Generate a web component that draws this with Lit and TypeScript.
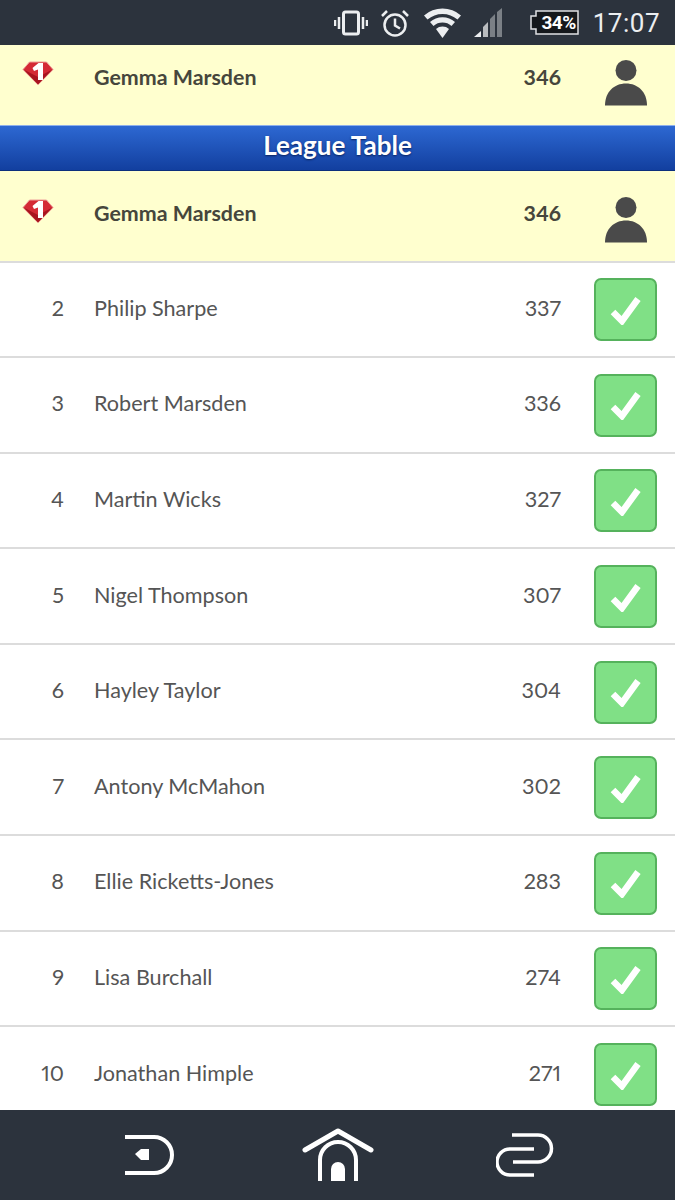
import { LitElement, html, css } from 'lit';
import { customElement } from 'lit/decorators.js';

const players = [
  { pos: 2, name: 'Philip Sharpe', pts: 337 },
  { pos: 3, name: 'Robert Marsden', pts: 336 },
  { pos: 4, name: 'Martin Wicks', pts: 327 },
  { pos: 5, name: 'Nigel Thompson', pts: 307 },
  { pos: 6, name: 'Hayley Taylor', pts: 304 },
  { pos: 7, name: 'Antony McMahon', pts: 302 },
  { pos: 8, name: 'Ellie Ricketts-Jones', pts: 283 },
  { pos: 9, name: 'Lisa Burchall', pts: 274 },
  { pos: 10, name: 'Jonathan Himple', pts: 271 },
];

const gem = html`<svg class="gem" width="32" height="24" viewBox="0 0 32 24">
  <path d="M7.500 1h17L31 8.500 16 23.500 1 8.500z" fill="#d42a35" stroke="#eea09a" stroke-width="1" stroke-linejoin="round"/>
  <path d="M1.500 8.500L16 23.500 30.500 8.500 16 16z" fill="#a8141f"/>
  <path d="M10.500 7l6-5h4.500v17h-5V8.500l-4 1.500z" fill="#fff"/>
</svg>`;

const person = html`<svg class="person" width="42" height="46" viewBox="0 0 42 46">
  <circle cx="21" cy="10.500" r="10.500" fill="#4a4a4a"/>
  <path d="M0 45.500C0 32 9 23.500 21 23.500S42 32 42 45.500z" fill="#4a4a4a"/>
</svg>`;

const check = html`<span class="check"><svg width="32" height="30" viewBox="0 0 32 30">
  <path d="M3 17l9 9L28 4" fill="none" stroke="#fff" stroke-width="6.500"/>
</svg></span>`;

@customElement('app-root')
export class AppRoot extends LitElement {
  static styles = css`
    :host {
      display: block;
      width: 675px;
      height: 1200px;
      background: #fff;
      font-family: 'Lato', 'Open Sans', sans-serif;
      font-variant-numeric: proportional-nums;
      overflow: hidden;
    }
    .page {
      height: 1200px;
      display: flex;
      flex-direction: column;
    }
    .status {
      height: 45px;
      flex: none;
      background: #2c333d;
      display: flex;
      align-items: center;
      justify-content: flex-end;
      padding-right: 15px;
      color: #eceef0;
    }
    .status svg {
      display: block;
    }
    .alarm {
      margin-left: 13px;
    }
    .wifi {
      margin-left: 15px;
    }
    .signal {
      margin-left: 13px;
    }
    .batt {
      width: 50px;
      height: 25px;
      margin-left: 27px;
      position: relative;
      box-sizing: border-box;
      color: #fff;
      font: bold 19px/25px 'Roboto', sans-serif;
      text-align: right;
      padding-right: 3px;
      letter-spacing: -0.5px;
    }
    .batt svg {
      position: absolute;
      left: 0;
      top: 0;
    }
    .batt span {
      position: relative;
    }
    .clock {
      font: 26px 'Roboto', sans-serif;
      margin-left: 14px;
      letter-spacing: 0.5px;
    }
    .list {
      flex: 1;
      overflow: hidden;
    }
    .row {
      display: grid;
      grid-template-columns: 94px 1fr 60px 114px;
      align-items: center;
      box-sizing: border-box;
      height: 95.600px;
      padding-bottom: 3px;
      border-bottom: 2px solid #dcdcdc;
      color: #555;
      font-size: 21.600px;
    }
    .row.me {
      background: #ffffcf;
      color: #46463c;
      font-weight: 700;
      font-size: 21.400px;
      height: 91.500px;
      align-items: start;
      padding: 28px 0 0;
    }
    .row.me.top {
      height: 80px;
      border-bottom: 0;
      padding-top: 16px;
    }
    .me .text {
      padding-top: 1px;
    }
    .me.top .text {
      padding-top: 3px;
    }
    .pos {
      text-align: right;
      padding-right: 30px;
    }
    .pts {
      text-align: right;
    }
    .side {
      display: flex;
      justify-content: center;
      padding-left: 16px;
    }
    .person {
      margin: -2px 1px 0 0;
    }
    .me.top .person {
      margin-top: -1px;
    }
    .gem {
      display: block;
      margin-left: 22px;
    }
    .banner {
      height: 46px;
      box-sizing: border-box;
      background: linear-gradient(#2d68d2, #123f9f);
      border-top: 1px solid #8fb0ea;
      border-bottom: 1px solid #0c2f7c;
      color: #fff;
      font-size: 26px;
      font-weight: 700;
      line-height: 38px;
      text-align: center;
      text-shadow: 0 1px 2px #0a2360;
    }
    .check {
      width: 63px;
      height: 63px;
      box-sizing: border-box;
      border: 2px solid #55b25c;
      border-radius: 7px;
      background: #80e086;
      display: flex;
      align-items: center;
      justify-content: center;
      margin-top: 4px;
      margin-left: -1px;
    }
    .nav {
      height: 90px;
      flex: none;
      background: #2c333d;
      display: flex;
      align-items: center;
      justify-content: center;
    }
    .nav svg {
      display: block;
    }
    .nav .slot {
      width: 187.500px;
      display: flex;
      justify-content: center;
    }
  `;

  private meRow(top: boolean) {
    return html`<div class="row me ${top ? 'top' : ''}">
      ${gem}
      <span class="text">Gemma Marsden</span>
      <span class="text pts">346</span>
      <span class="side">${person}</span>
    </div>`;
  }

  render() {
    return html`<div class="page">
      <div class="status">
        <svg width="34" height="26" viewBox="0 0 34 26" fill="none" stroke="#eceef0">
          <rect x="9.500" y="2" width="15" height="22" rx="2" stroke-width="3"/>
          <path d="M5 7v12M1 10v6M29 7v12M33 10v6" stroke-width="2.500"/>
        </svg>
        <svg class="alarm" width="28" height="28" viewBox="0 0 28 28" fill="none" stroke="#eceef0" stroke-width="2.500">
          <circle cx="14" cy="16" r="10.500"/>
          <path d="M14 9.500V16.500l5 3M1 7l5-5M27 7l-5-5"/>
        </svg>
        <svg class="wifi" width="37" height="31" viewBox="0 0 37 31" fill="#eceef0">
          <path d="M0 8.500a28 28 0 0 1 37 0l-3.500 4a23 23 0 0 0-30 0z"/>
          <path d="M6 15a19 19 0 0 1 25 0l-3.500 4a13.500 13.500 0 0 0-18 0z"/>
          <path d="M12 22a10 10 0 0 1 13 0L18.500 31z"/>
        </svg>
        <svg class="signal" width="28" height="29" viewBox="0 0 28 29">
          <path d="M0 29l7-6v6z" fill="#eceef0"/>
          <path d="M9 29V19l5-5v15z" fill="#b9bcbf"/>
          <path d="M16 29V11l5-5v23z" fill="#7b8086"/>
          <path d="M23 29V4l5-4v29z" fill="#7b8086"/>
        </svg>
        <div class="batt">
          <svg width="50" height="25" viewBox="0 0 50 25">
            <path d="M7 1h42v23H7v-5H2V6h5z" fill="#15181c" stroke="#dfe1e3" stroke-width="1.500"/>
          </svg>
          <span>34%</span>
        </div>
        <div class="clock">17:07</div>
      </div>
      <div class="list">
        ${this.meRow(true)}
        <div class="banner">League Table</div>
        ${this.meRow(false)}
        ${players.map(
          (p) => html`<div class="row">
            <span class="pos">${p.pos}</span>
            <span>${p.name}</span>
            <span class="pts">${p.pts}</span>
            <span class="side">${check}</span>
          </div>`
        )}
      </div>
      <div class="nav">
        <span class="slot"><svg width="50" height="42" viewBox="0 0 50 42" fill="none" stroke="#fff" stroke-width="4">
          <path d="M0 3h29a18 18 0 0 1 0 36H0"/>
          <path d="M10 20l6-5h8v11h-8z" fill="#fff" stroke="none"/>
        </svg></span>
        <span class="slot"><svg width="72" height="54" viewBox="0 0 72 54" fill="none" stroke="#fff">
          <path d="M3 22L36 3l33 19" stroke-width="5" stroke-linecap="round" stroke-linejoin="round"/>
          <path d="M18 53V32a18 18 0 0 1 36 0v21" stroke-width="4"/>
          <path d="M29 53V41a7 7 0 0 1 14 0v12z" fill="#fff" stroke="none"/>
        </svg></span>
        <span class="slot"><svg width="58" height="44" viewBox="0 0 58 44" fill="none" stroke="#fff" stroke-width="3.500">
          <path d="M16 2h26a13.500 13.500 0 0 1 0 27H17"/>
          <path d="M38 16H14a13 13 0 0 0 0 26h24"/>
        </svg></span>
      </div>
    </div>`;
  }
}
